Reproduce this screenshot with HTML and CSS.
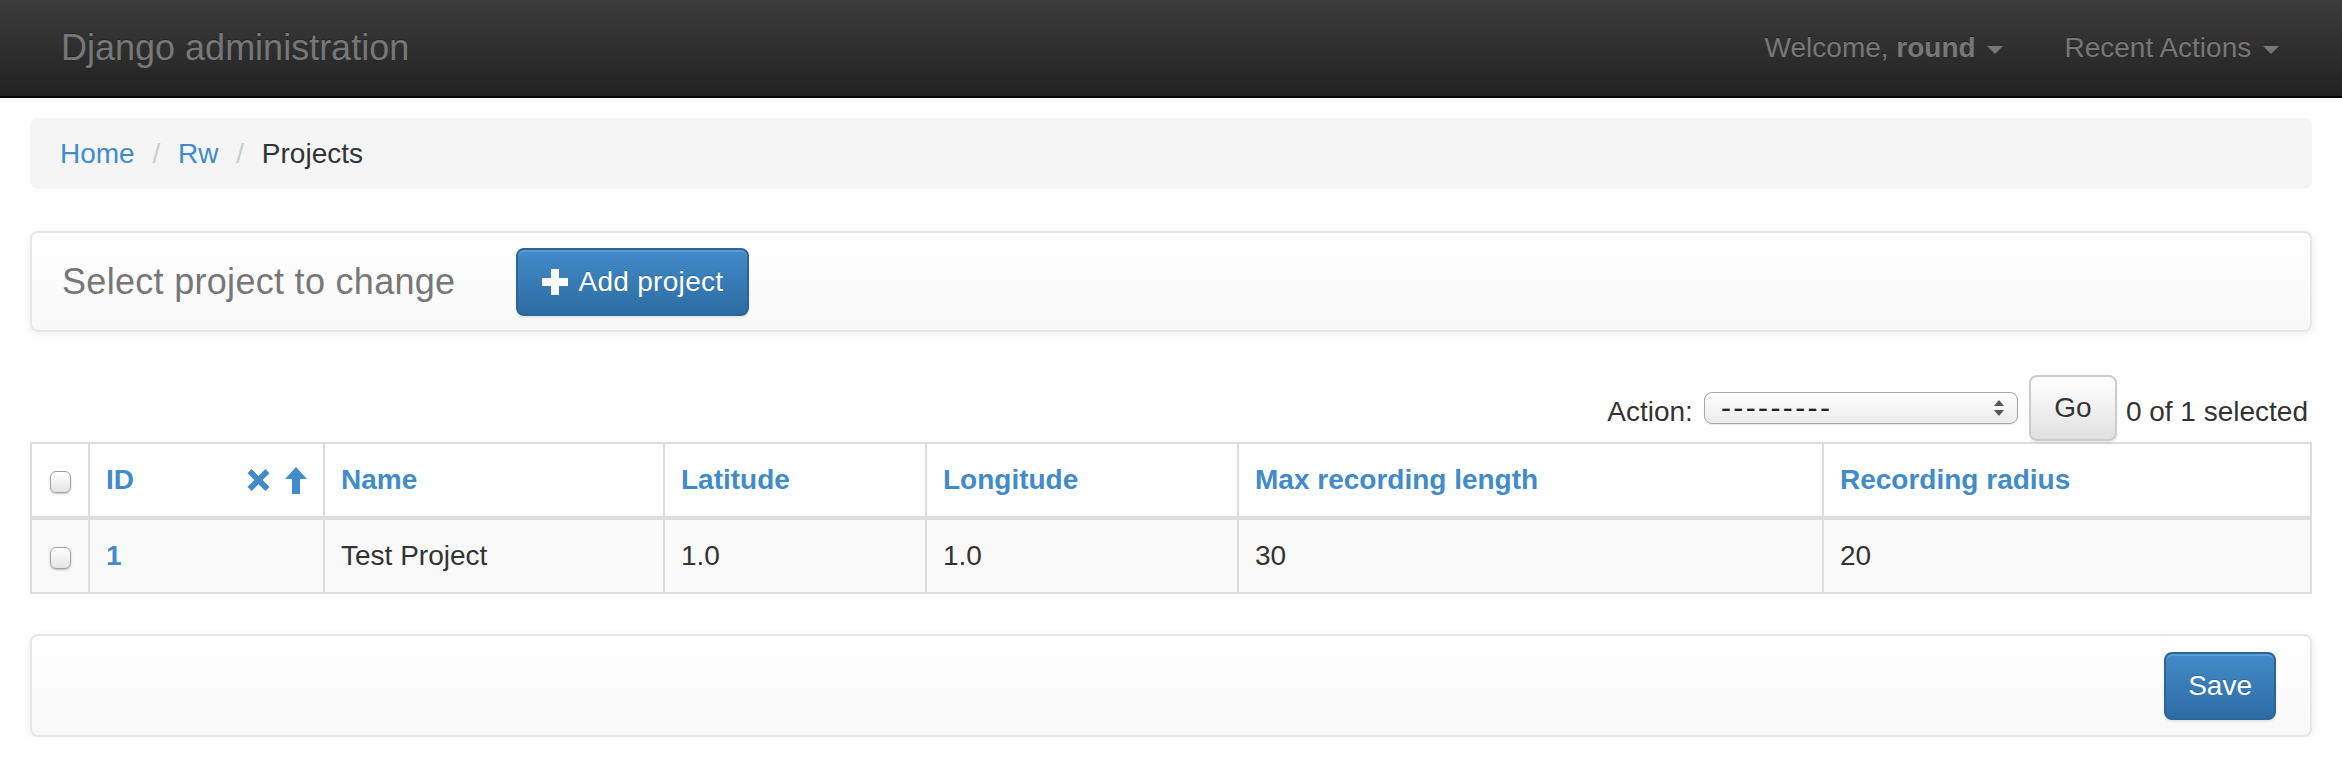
FILE: index.html
```html
<!DOCTYPE html>
<html lang="en">
<head>
<meta charset="utf-8">
<title>Select project to change | Django site admin</title>
<link rel="stylesheet" href="styles.css">
</head>
<body>
<header class="topbar">
  <div class="topbar-inner">
    <a class="brand" href="#">Django administration</a>
    <ul class="topnav">
      <li><a href="#">Welcome, <strong>round</strong> <span class="caret"></span></a></li>
      <li><a href="#">Recent Actions <span class="caret"></span></a></li>
    </ul>
  </div>
</header>

<main class="page">
  <ol class="crumbs">
    <li><a href="#">Home</a></li>
    <li><a href="#">Rw</a></li>
    <li class="active">Projects</li>
  </ol>

  <div class="panel-bar titlebar">
    <h1 class="title">Select project to change</h1>
    <a class="btn btn-primary btn-add" href="#">
      <svg class="icon-plus" width="26" height="26" viewBox="0 0 26 26" aria-hidden="true"><rect x="9" y="0" width="8" height="26" fill="#fff"/><rect x="0" y="9" width="26" height="8" fill="#fff"/></svg>
      <span class="btn-text">Add project</span>
    </a>
  </div>

  <div class="actions">
    <span class="action-label">Action:</span>
    <div class="select">
      <span class="select-value">---------</span>
      <svg class="select-arrows" width="10" height="16" viewBox="0 0 10 16" aria-hidden="true"><polygon points="0,6 5,0 10,6" fill="#555"/><polygon points="0,10 5,16 10,10" fill="#555"/></svg>
    </div>
    <button class="btn btn-default btn-go" type="button">Go</button>
    <span class="action-counter">0 of 1 selected</span>
  </div>

  <table class="results">
    <colgroup>
      <col class="c-check">
      <col class="c-id">
      <col class="c-name">
      <col class="c-lat">
      <col class="c-lon">
      <col class="c-max">
      <col class="c-rad">
    </colgroup>
    <thead>
      <tr>
        <th><input class="check" type="checkbox"></th>
        <th>
          <div class="th-sort">
            <a href="#">ID</a>
            <span class="sort-icons">
              <svg width="23" height="22" viewBox="0 0 24 24" aria-hidden="true"><polygon points="4.5,0 12,7.5 19.5,0 24,4.5 16.5,12 24,19.5 19.5,24 12,16.5 4.5,24 0,19.5 7.5,12 0,4.5" fill="#428bca"/></svg>
              <svg width="22" height="27" viewBox="0 0 22 27" aria-hidden="true"><polygon points="11,0 22,12 15,12 15,27 7,27 7,12 0,12" fill="#428bca"/></svg>
            </span>
          </div>
        </th>
        <th><a href="#">Name</a></th>
        <th><a href="#">Latitude</a></th>
        <th><a href="#">Longitude</a></th>
        <th><a href="#">Max recording length</a></th>
        <th><a href="#">Recording radius</a></th>
      </tr>
    </thead>
    <tbody>
      <tr>
        <td><input class="check" type="checkbox"></td>
        <td><a class="id-link" href="#">1</a></td>
        <td>Test Project</td>
        <td>1.0</td>
        <td>1.0</td>
        <td>30</td>
        <td>20</td>
      </tr>
    </tbody>
  </table>

  <div class="panel-bar savebar">
    <button class="btn btn-primary btn-save" type="button">Save</button>
  </div>
</main>
</body>
</html>
```

FILE: styles.css
```css
html, body {
  margin: 0;
  padding: 0;
  background: #fff;
}

body {
  font-family: "Liberation Sans", Arial, Helvetica, sans-serif;
  font-size: 28px;
  line-height: 40px;
  color: #333;
}

a {
  color: #428bca;
  text-decoration: none;
}

/* ---------- top navbar ---------- */
.topbar {
  height: 96px;
  border-bottom: 2px solid #080808;
  background: linear-gradient(to bottom, #3c3c3c 0%, #222 100%);
}

.topbar-inner {
  height: 100%;
  display: flex;
  align-items: center;
  justify-content: space-between;
  padding: 0 33px 0 31px;
}

.brand {
  padding: 0 30px;
  font-size: 36px;
  line-height: 40px;
  color: #777;
  text-shadow: 0 -1px 0 rgba(0, 0, 0, 0.25);
}

.topnav {
  display: flex;
  list-style: none;
  margin: 0;
  padding: 0;
}

.topnav a {
  display: block;
  padding: 0 30px;
  color: #777;
  line-height: 40px;
  text-shadow: 0 -1px 0 rgba(0, 0, 0, 0.25);
}

.topnav li:first-child a {
  padding-right: 31px;
}

.caret {
  display: inline-block;
  width: 0;
  height: 0;
  margin-left: 4px;
  vertical-align: middle;
  border-top: 8px solid #777;
  border-left: 8px solid transparent;
  border-right: 8px solid transparent;
}

/* ---------- breadcrumb ---------- */
.crumbs {
  list-style: none;
  margin: 20px 30px 0;
  padding: 16px 30px 15px;
  background: #f5f5f5;
  border-radius: 8px;
}

.crumbs li {
  display: inline-block;
}

.crumbs li + li::before {
  content: "/\00a0";
  padding: 0 10px;
  color: #ccc;
}

.crumbs .active {
  color: #333;
}

/* ---------- panel bars ---------- */
.panel-bar {
  box-sizing: border-box;
  display: flex;
  align-items: center;
  border: 2px solid #e7e7e7;
  border-radius: 8px;
  background: linear-gradient(to bottom, #fff 0%, #f8f8f8 100%);
  box-shadow: inset 0 2px 0 rgba(255, 255, 255, 0.15), 0 2px 10px rgba(0, 0, 0, 0.075);
}

.titlebar {
  margin: 42px 30px 0;
  height: 101px;
}

.title {
  margin: 0;
  padding: 0 30px;
  font-size: 36px;
  font-weight: normal;
  line-height: 40px;
  letter-spacing: 0.3px;
  color: #777;
}

/* ---------- buttons ---------- */
.btn {
  box-sizing: border-box;
  display: inline-flex;
  align-items: center;
  height: 68px;
  padding: 0 24px;
  border: 2px solid transparent;
  border-radius: 8px;
  font-family: inherit;
  font-size: 28px;
  line-height: 40px;
  cursor: pointer;
}

.btn-primary {
  color: #fff;
  background: linear-gradient(to bottom, #428bca 0%, #2d6ca2 100%);
  border-color: #2b669a;
  text-shadow: 0 -1px 0 rgba(0, 0, 0, 0.2);
  box-shadow: inset 0 2px 0 rgba(255, 255, 255, 0.15), 0 2px 2px rgba(0, 0, 0, 0.075);
}

.btn-default {
  color: #333;
  background: linear-gradient(to bottom, #fff 0%, #e0e0e0 100%);
  border-color: #ccc;
  text-shadow: 0 1px 0 #fff;
  box-shadow: inset 0 2px 0 rgba(255, 255, 255, 0.15), 0 2px 2px rgba(0, 0, 0, 0.075);
}

.btn-add {
  margin-left: 31px;
}

.icon-plus {
  margin-right: 10px;
  flex: none;
}

.btn-text {
  letter-spacing: 0.3px;
}

.btn-save {
  padding: 0 22px;
}

/* ---------- action row ---------- */
.actions {
  display: flex;
  justify-content: flex-end;
  align-items: center;
  height: 66px;
  margin: 43px 34px 0 30px;
}

.action-label {
  margin-right: 11px;
  padding-top: 8px;
}

.select {
  box-sizing: border-box;
  width: 314px;
  height: 32px;
  margin-right: 11px;
  display: flex;
  align-items: center;
  justify-content: space-between;
  padding: 0 13px 0 16px;
  border: 1.5px solid #a6a6a6;
  border-radius: 8px;
  background: linear-gradient(to bottom, #fff 0%, #ececec 100%);
  box-shadow: 0 1px 1px rgba(0, 0, 0, 0.08);
}

.select-value {
  font-size: 30px;
  line-height: 28px;
  letter-spacing: 2.4px;
  color: #222;
}

.btn-go {
  width: 88px;
  height: 66px;
  padding: 0;
  justify-content: center;
  margin-right: 9px;
}

.action-counter {
  padding-top: 8px;
}

/* ---------- results table ---------- */
.results {
  width: calc(100% - 60px);
  margin: 1px 30px 0;
  border-collapse: collapse;
  table-layout: fixed;
  border: 2px solid #ddd;
}

.c-check { width: 58px; }
.c-id { width: 235px; }
.c-name { width: 340px; }
.c-lat { width: 262px; }
.c-lon { width: 312px; }
.c-max { width: 585px; }

.results th,
.results td {
  padding: 16px;
  border: 2px solid #ddd;
  text-align: left;
  line-height: 40px;
  vertical-align: top;
}

.results thead th {
  background: #fff;
  border-bottom-width: 4px;
  font-weight: bold;
}

.results tbody tr {
  background: #f9f9f9;
}

.th-sort {
  display: flex;
  justify-content: space-between;
  align-items: center;
}

.sort-icons {
  display: flex;
  align-items: center;
  gap: 15px;
}

.id-link {
  font-weight: bold;
}

.check {
  -webkit-appearance: none;
  appearance: none;
  box-sizing: border-box;
  display: inline-block;
  width: 21px;
  height: 22px;
  margin: 0 0 0 2px;
  vertical-align: middle;
  border: 1.5px solid #a2a2a2;
  border-radius: 6px;
  background: linear-gradient(to bottom, #fff 0%, #e4e4e4 100%);
  box-shadow: 0 1px 2px rgba(0, 0, 0, 0.25);
}

/* ---------- save bar ---------- */
.savebar {
  margin: 40px 30px 0;
  height: 103px;
  justify-content: flex-end;
  padding: 0 34px 0 32px;
}
```
